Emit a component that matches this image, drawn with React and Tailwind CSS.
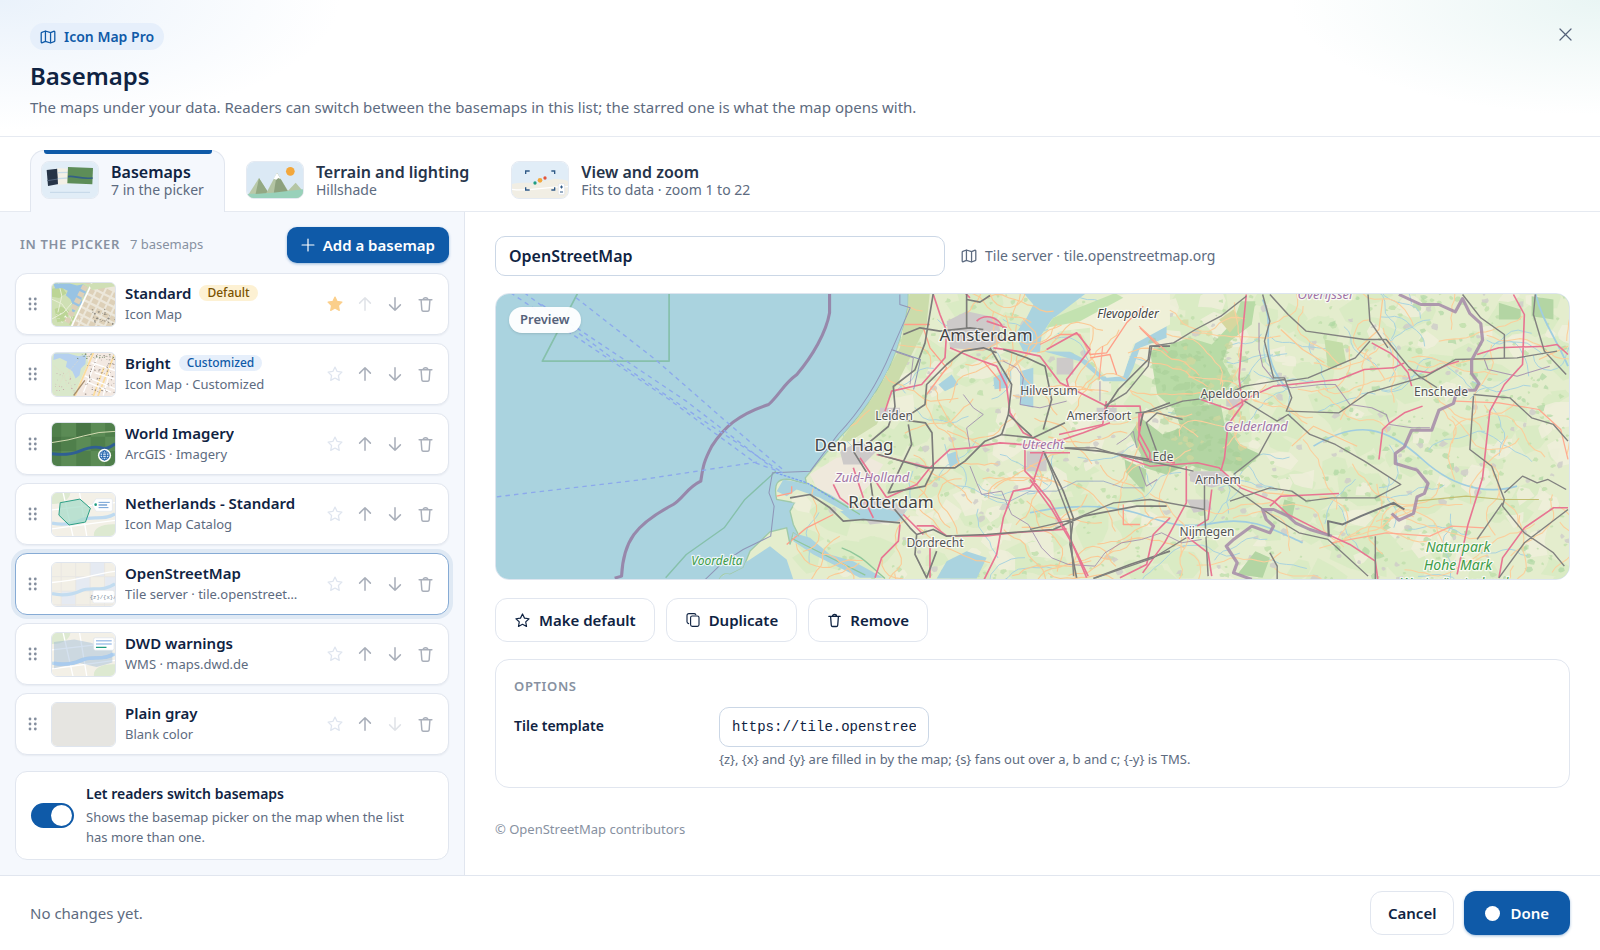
import { useState } from "react";

/* ---------- icons ---------- */

function Icon({ size = 20, children, className = "" }) {
  return (
    <svg
      width={size}
      height={size}
      viewBox="0 0 20 20"
      fill="none"
      stroke="currentColor"
      strokeWidth="1.4"
      strokeLinecap="round"
      strokeLinejoin="round"
      aria-hidden="true"
      className={"shrink-0 " + className}
    >
      {children}
    </svg>
  );
}

const MapIcon = (p) => (
  <Icon {...p}>
    <path
      d="M1.500 5.200c0-.5.300-.9.800-1.100L6.800 2.500 13.200 4.500 17 2.900c.8-.3 1.500.200 1.500.9v11c0 .5-.3.9-.8 1.100L13.200 17.500 6.800 15.500 3 17.100c-.8.300-1.500-.2-1.500-.9zM6.800 2.500v13M13.200 4.500v13"
      strokeWidth="1.600"
    />
  </Icon>
);

const STAR = "M10 2.300l2.350 4.900 5.350.75-3.900 3.750.95 5.350L10 14.500l-4.750 2.550.95-5.350L2.300 7.950l5.350-.75z";
const StarIcon = ({ filled, ...p }) => (
  <Icon {...p}>
    <path d={STAR} fill={filled ? "currentColor" : "none"} />
  </Icon>
);
const ArrowUp = (p) => (
  <Icon {...p}>
    <path d="M10 17V3M4 9l6-6 6 6" strokeWidth="1.700" />
  </Icon>
);
const ArrowDown = (p) => (
  <Icon {...p}>
    <path d="M10 3v14M4 11l6 6 6-6" strokeWidth="1.700" />
  </Icon>
);
const TrashIcon = (p) => (
  <Icon {...p}>
    <path d="M2.500 4.500h15M7.300 4.300C7.300 2.900 8.400 2 10 2s2.700.9 2.700 2.300M4.800 4.700l.9 11.600c.1 1 .8 1.700 1.800 1.700h5c1 0 1.700-.7 1.800-1.700l.9-11.600" strokeWidth="1.700" />
  </Icon>
);
const CopyIcon = (p) => (
  <Icon {...p}>
    <rect x="7" y="5" width="10.500" height="13" rx="2" />
    <path d="M4.600 14.500C3.400 14.300 2.500 13.500 2.500 12.200V4.500c0-1.700 1.200-2.500 2.500-2.500h6.200c1.200 0 2 .5 2.300 1.300" />
  </Icon>
);
const PlusIcon = (p) => (
  <Icon {...p}>
    <path d="M10 1.500v17M1.500 10h17" strokeWidth="1.700" />
  </Icon>
);
const CloseIcon = (p) => (
  <Icon {...p}>
    <path d="M3.500 3.500l13 13M16.500 3.500l-13 13" />
  </Icon>
);
const GripIcon = () => (
  <svg width="10" height="14" viewBox="0 0 10 14" fill="currentColor" aria-hidden="true">
    {[2, 7, 12].map((y) => (
      <g key={y}>
        <circle cx="2" cy={y} r="1.400" />
        <circle cx="7.300" cy={y} r="1.400" />
      </g>
    ))}
  </svg>
);

/* ---------- deterministic scatter for map texture ---------- */

function rng(seed) {
  let s = seed;
  return () => {
    s = (s * 1664525 + 1013904223) % 4294967296;
    return s / 4294967296;
  };
}

function blob(rand, cx, cy, r) {
  const n = 7;
  let d = "";
  for (let i = 0; i < n; i++) {
    const a = (i / n) * Math.PI * 2;
    const q = r * (0.5 + rand() * 0.8);
    d += (i ? "L" : "M") + (cx + Math.cos(a) * q * 1.2).toFixed(1) + " " + (cy + Math.sin(a) * q).toFixed(1);
  }
  return d + "Z";
}

function scatter(seed, count, x0, x1, y0, y1, rMin, rMax) {
  const rand = rng(seed);
  let d = "";
  for (let i = 0; i < count; i++) {
    d += blob(rand, x0 + rand() * (x1 - x0), y0 + rand() * (y1 - y0), rMin + rand() * (rMax - rMin));
  }
  return d;
}

function wander(seed, count, x0, x1, y0, y1, len) {
  const rand = rng(seed);
  let d = "";
  for (let i = 0; i < count; i++) {
    let x = x0 + rand() * (x1 - x0);
    let y = y0 + rand() * (y1 - y0);
    let a = rand() * Math.PI * 2;
    d += "M" + x.toFixed(1) + " " + y.toFixed(1);
    for (let k = 0; k < len; k++) {
      a += (rand() - 0.5) * 1.1;
      x += Math.cos(a) * 7;
      y += Math.sin(a) * 6;
      d += "L" + x.toFixed(1) + " " + y.toFixed(1);
    }
  }
  return d;
}

/* ---------- thumbnails ---------- */

function StandardThumb() {
  const blocks = [];
  for (let i = -1; i < 7; i++) for (let j = 0; j < 7; j++) blocks.push([i, j]);
  return (
    <svg viewBox="0 0 192 132" className="size-full" preserveAspectRatio="xMidYMid slice" aria-hidden="true">
      <rect width="192" height="132" fill="#d3dfba" />
      <path d="M0 0h110L122 20 70 132H0z" fill="#cfe0b4" />
      <path d="M0 18l30-6 14 20-22 14-22-4zM8 80l20-8 24 14-6 28-30 6zM60 100l20 4-6 24H52z" fill="#bcd596" />
      <path d="M0 50l30 14 20 28 18 40M0 110l36-20 24-28M20 0l10 40-12 50" stroke="#e9efd6" strokeWidth="3" fill="none" />
      <path d="M4 2h50l22 6 18-4 14 10-8 24-10 8 2 18-14 10-12 18-6-4 4-20-8-18-14-12 6-14-18-8-20 2z" fill="#98c3e3" />
      <path d="M118 10h74v122H64z" fill="#ece7da" />
      <g transform="translate(116 14) rotate(27)">
        {blocks.map(([i, j]) => (
          <rect key={i + "-" + j} x={i * 24} y={j * 22 - 20} width="18" height="15" fill="#ddd0b8" />
        ))}
      </g>
      <path d="M122 0L60 132" stroke="#fff" strokeWidth="5" />
      <path d="M110 4l20-4h62v10l-70 12z" fill="#cfdfb5" />
      <path d={scatter(3, 26, 120, 190, 80, 130, 1, 3)} fill="#8f8a80" />
      <path d={scatter(5, 18, 10, 90, 90, 130, 1, 2)} fill="#fff" />
    </svg>
  );
}

function BrightThumb() {
  return (
    <svg viewBox="0 0 192 132" className="size-full" preserveAspectRatio="xMidYMid slice" aria-hidden="true">
      <rect width="192" height="132" fill="#f3e9e2" />
      <path d="M0 0h104L110 30 66 132H0z" fill="#d9e8cb" />
      <path d="M6 2h44l30 8 24-4-2 28-14 14-4 20-12 10-10-22-20-14 4-16-22-10-20 6z" fill="#b5d0ef" />
      <path d="M50 50c10 20-6 40 20 80M6 40l30 24 10 40M80 24L30 80 6 128" stroke="#e6dcc4" strokeWidth="2" fill="none" strokeDasharray="4 3" />
      <path d="M126 0L70 132M160 40l-34 92M192 0l-52 132" stroke="#fbdc9c" strokeWidth="5" fill="none" />
      <path d="M140 10l-44 110M176 60l-20 70M110 90l70 30M130 60l60 20M100 70l92 40M120 30l72 24" stroke="#fff" strokeWidth="4" fill="none" />
      <path d={scatter(11, 70, 96, 190, 4, 128, 1, 2.2)} fill="#8d827d" />
      <path d={scatter(13, 30, 70, 190, 2, 20, 1, 2.4)} fill="#7b8f73" />
      <path d={scatter(17, 22, 4, 80, 60, 126, 0.8, 2)} fill="#c59aa6" />
      <path d="M100 84l-34 46" stroke="#a58d6e" strokeWidth="4" />
    </svg>
  );
}

function ImageryThumb() {
  return (
    <svg viewBox="0 0 192 132" className="size-full" preserveAspectRatio="xMidYMid slice" aria-hidden="true">
      <rect width="192" height="132" fill="#4f7f4b" />
      <path d="M28 0h46v42H28zM118 0h44v42h-44zM0 42h28v44H0zM74 42h44v44H74zM162 42h30v44h-30zM28 86h46v46H28zM118 86h44v46h-44z" fill="#5b8b55" />
      <path d="M0 42h28v44H0zM74 0h44v42H74z" fill="#487545" />
      <path d="M0 60Q50 54 96 40T192 26" stroke="#d5dcb4" strokeWidth="3" fill="none" />
      <path d="M0 94c30 4 60 2 84-8s44-16 64-10 32-4 44-12" stroke="#2f5f93" strokeWidth="9" fill="none" />
      <circle cx="160" cy="99" r="20" fill="#fff" />
      <g stroke="#165ba6" strokeWidth="3" fill="none">
        <circle cx="160" cy="99" r="14" fill="#dce9f8" />
        <ellipse cx="160" cy="99" rx="6" ry="14" />
        <path d="M146 99h28M148 92h24M148 106h24" strokeWidth="2.500" />
      </g>
    </svg>
  );
}

function PaleBase() {
  return (
    <>
      <rect width="192" height="132" fill="#f3f0e7" />
      <path d="M0 0h56c-2 22-30 36-56 34zM128 132c-4-22 20-38 64-36v36z" fill="#dde9d1" />
      <path d="M0 52L192 30M34 0l30 132M84 0l22 132M0 110l192-26" stroke="#fff" strokeWidth="4" fill="none" />
      <path d="M0 92c34 8 60 4 90-10s70 4 102-18" stroke="#bedaf0" strokeWidth="10" fill="none" />
    </>
  );
}

function CatalogThumb() {
  return (
    <svg viewBox="0 0 192 132" className="size-full" preserveAspectRatio="xMidYMid slice" aria-hidden="true">
      <PaleBase />
      <path d="M25 30l60-11 32 28-15 42-50 9-31-30z" fill="#a8dcc9" fillOpacity=".75" stroke="#2a9d84" strokeWidth="3" strokeLinejoin="round" />
      <path d="M122 36l12-18h46q4 0 4 4v30q0 4-4 4h-46z" fill="#fff" stroke="#e1e6ee" strokeWidth="2" />
      <circle cx="133" cy="36" r="4" fill="#1f9c81" />
      <path d="M142 29h34M142 45h30" stroke="#6f9fd4" strokeWidth="3" />
      <path d="M142 37h26" stroke="#3273bd" strokeWidth="3" />
    </svg>
  );
}

function TileThumb() {
  return (
    <svg viewBox="0 0 192 132" className="size-full" preserveAspectRatio="xMidYMid slice" aria-hidden="true">
      <rect width="192" height="132" fill="#f2efe6" />
      <path d="M116 0h46v40h-46zM72 42h44v42H72zM28 86h44v46H28zM162 42h30v42h-30z" fill="#e5eaf2" />
      <path d="M28 0v132M72 0v132M116 0v132M160 0v132M0 42h192M0 86h192M0 128h192" stroke="#e9e7e3" strokeWidth="3" />
      <path d="M0 60Q60 54 110 42T192 26" stroke="#fff" strokeWidth="4" fill="none" />
      <path d="M0 94c34 8 64 2 90-10s66 6 102-20" stroke="#c2dcf0" strokeWidth="10" fill="none" />
      <rect x="124" y="84" width="66" height="38" rx="6" fill="#fff" stroke="#e3e7ee" strokeWidth="2" />
      <text x="115" y="110" className="font-mono" fontSize="17" fill="#6e7f93">
        {"{z}/{x}/{y}"}
      </text>
    </svg>
  );
}

function WmsThumb() {
  return (
    <svg viewBox="0 0 192 132" className="size-full" preserveAspectRatio="xMidYMid slice" aria-hidden="true">
      <PaleBase />
      <path d="M6 28l62-8 50 10 66 22v38l-48 14-52-12L6 108z" fill="#8fb0d6" fillOpacity=".38" />
      <path d="M6 92c34 8 60 4 90-10s60 4 90-18" stroke="#a9cbee" strokeWidth="10" fill="none" />
      <rect x="127" y="15" width="62" height="38" rx="5" fill="#fff" stroke="#dbe2ea" strokeWidth="2" />
      <path d="M134 24h48M134 34h48" stroke="#a7c5ea" strokeWidth="5" />
      <path d="M134 44h32" stroke="#1f9c81" strokeWidth="4" />
    </svg>
  );
}

function BlankThumb() {
  return <div className="size-full bg-[#e6e5e1]" />;
}

function BasemapsTabArt() {
  return (
    <svg viewBox="0 0 168 108" className="size-full" aria-hidden="true">
      <rect width="168" height="108" fill="#e1edf7" />
      <path d="M14 24l32-4 4 46-32 6z" fill="#263447" />
      <path d="M16 56l32-5" stroke="#51627a" strokeWidth="3" />
      <path d="M46 18l34 2v46l-32 2z" fill="#f3f0e6" />
      <path d="M48 32l32-1M48 50l32-2" stroke="#c7dbe9" strokeWidth="4" />
      <path d="M78 15l75 3-2 49-75-3z" fill="#5d8d58" />
      <path d="M78 44c20-4 34 8 74 4" stroke="#335f86" strokeWidth="5" fill="none" />
      <path d="M24 91h120" stroke="#c3d6e7" strokeWidth="3" />
    </svg>
  );
}

function TerrainTabArt() {
  return (
    <svg viewBox="0 0 168 108" className="size-full" aria-hidden="true">
      <rect width="168" height="108" fill="#dbe9f5" />
      <circle cx="130" cy="28" r="13" fill="#f3a73b" />
      <path d="M110 100l36-38 22 26v20h-58z" fill="#b5c6a5" />
      <path d="M0 104l36-56 38 60H0z" fill="#b9c9a8" />
      <path d="M36 48l36 56H24z" fill="#93a883" />
      <path d="M50 108l40-76 46 76z" fill="#b3c4a3" />
      <path d="M90 32l44 76H78z" fill="#8da17e" />
      <path d="M90 32l12 20-8-4-6 5-8-3z" fill="#fff" />
      <path d="M0 96c50 0 90-4 168-14v26H0z" fill="#98d1ba" />
    </svg>
  );
}

function ViewTabArt() {
  return (
    <svg viewBox="0 0 168 108" className="size-full" aria-hidden="true">
      <rect width="168" height="108" fill="#e1edf7" />
      <path d="M0 66c40-8 60 2 100-10 30-8 50-6 68 2v50H0z" fill="#f1eee4" />
      <path d="M0 82c50 8 90-8 168-8" stroke="#fff" strokeWidth="4" fill="none" />
      <path d="M41 36v-9h12M118 27h10v9M41 76v8h12M118 84h10v-8" stroke="#2f5986" strokeWidth="4" fill="none" />
      <circle cx="69" cy="63" r="5" fill="#1f9c81" />
      <circle cx="84" cy="55" r="7" fill="#f3a73b" />
      <circle cx="99" cy="48" r="5" fill="#e2553d" />
      <rect x="139" y="65" width="19" height="33" rx="4" fill="#fff" stroke="#dde3ec" strokeWidth="2" />
      <path d="M144 75h9M148.500 70.500v9M144 90h9" stroke="#2f5986" strokeWidth="3" />
    </svg>
  );
}

/* ---------- large preview map ---------- */

const LAND =
  "M415 0L4000 0L4000 1000L-170 1000C-160 880 -150 860 -120 870L-80 850L-60 800L0 742L50 730L60 780L70 745L90 760L70 720L60 680L75 655L20 645C10 600 20 580 60 585L110 600L106 580L200 470C250 420 290 370 325 310C370 240 400 150 415 60Z";

const LABELS = [
  ["Amsterdam", 490, 47, 17, "#444444", false],
  ["Den Haag", 358, 157, 17, "#444444", false],
  ["Rotterdam", 395, 214, 17, "#444444", false],
  ["Leiden", 398, 126, 12, "#555555", false],
  ["Hilversum", 553, 101, 12, "#555555", false],
  ["Amersfoort", 603, 126, 12, "#555555", false],
  ["Apeldoorn", 734, 104, 12, "#555555", false],
  ["Enschede", 945, 102, 12, "#555555", false],
  ["Ede", 667, 167, 12, "#555555", false],
  ["Arnhem", 722, 190, 12, "#555555", false],
  ["Nijmegen", 711, 242, 12, "#555555", false],
  ["Dordrecht", 439, 253, 12, "#555555", false],
  ["Flevopolder", 632, 24, 12, "#444444", true],
  ["Utrecht", 547, 155, 13, "#a074a6", true],
  ["Zuid-Holland", 376, 188, 13, "#a074a6", true],
  ["Gelderland", 760, 137, 13, "#a074a6", true],
  ["Overijssel", 829, 5, 13, "#a074a6", true],
  ["Voordelta", 221, 271, 12, "#3d9c48", true],
  ["Naturpark", 962, 258, 14, "#3d9c48", true],
  ["Hohe Mark", 962, 276, 14, "#3d9c48", true],
  ["Westmünsterland", 958, 294, 14, "#3d9c48", true],
];

function PreviewMap() {
  return (
    <svg
      viewBox="0 0 1073 286"
      preserveAspectRatio="xMidYMid slice"
      role="img"
      aria-label="OpenStreetMap preview"
      className="absolute inset-0 size-full"
    >
      <defs>
        <clipPath id="land">
          <path d={LAND} transform="matrix(.3333 0 0 .3333 274 -9)" />
        </clipPath>
      </defs>
      <rect width="1073" height="286" fill="#aad3df" />

      <g transform="matrix(.3333 0 0 .3333 274 -9)">
        <path d={LAND} fill="#e4edcd" stroke="#9fc9a8" strokeWidth="4" />
      </g>

      <g clipPath="url(#land)">
        <path d={scatter(21, 260, 300, 1073, 0, 286, 6, 20)} fill="#d5eac0" fillOpacity=".7" />
        <path d={scatter(22, 120, 300, 1073, 0, 286, 5, 14)} fill="#f0efdc" fillOpacity=".8" />
        <path d={scatter(24, 520, 320, 1073, 0, 286, 1, 3)} fill="#bfdfab" fillOpacity=".8" />
        <path d={scatter(28, 80, 830, 1073, 0, 286, 1.5, 4)} fill="#abd59f" fillOpacity=".65" />
        <path d={scatter(25, 190, 300, 1073, 0, 286, 1.5, 4)} fill="#cfcdc9" fillOpacity=".85" />
        <path d={wander(31, 80, 320, 1073, 0, 286, 9)} fill="none" stroke="#a9d3df" strokeWidth="1" />

        <g transform="matrix(.3333 0 0 .3333 274 -9)">
          <path d="M420 20h60L470 120 400 260 320 420 240 470 210 470 320 320 390 190z" fill="#cbdcab" />
          <path d="M120 570l80-50 80-10 60 30-40 60-60 60-90-30z" fill="#efe9dc" />
          <path d="M530 110l60-30 90 20 20 70-60 30-100-10zM210 500l60-30 50 30-40 40-60 0zM250 660l90-20 70 30-20 40-90 10zM770 500h60v60h-60zM330 370h60v30h-60zM860 220h50v50h-50zM980 370h60v40h-60z" fill="#cdcac9" />
          <path d="M760 25h190L845 105 815 150 810 205 760 200 735 150 770 100 790 60z" fill="#aad3df" />
          <path d="M820 200l80 2 50 25 50 50 60-10 40-100 90-70V160L1110 190 1090 250 1070 290 1000 290 930 230z" fill="#aad3df" />
          <path d="M1060 30L850 100 815 180 870 140 960 130 960 220 1010 280 1060 275 1090 180 1200 120V20z" fill="#eff0d8" />
          <path d="M1035 26L850 100 830 130 930 110 1060 40z" fill="#c3e2b0" />
          <path d="M505 300l40-30 20 30-40 20zM670 280l40-20 4 50-40 4zM750 260l40-10v120l-40-10zM530 510l30-10 10 30-30 20z" fill="#aad3df" />
          <path d="M210 680l130-10 60 20-20 20-140-5zM70 745l50 15 60 50 70 20 90 50h-70l-80-40-60-30-60-40zM-160 885l100-60 60-40 50 40 20 60zM530 830l60-30 60 20-30 62H500z" fill="#aad3df" />
          <path d="M20 620l20-35 80 15 60 30 80 50-20 10-90-50-70-25-30 20z" fill="#aad3df" />
          <path d="M66 762l120 60 100 50M120 600l150 90M215 790c60 20 90 60 130 92" stroke="#8fc79a" strokeWidth="4" fill="none" />
        </g>

        <g transform="matrix(.3635 0 0 .3333 534 -14)">
          <path d="M330 215l110-40 60 20 60-70 20-60 40 0-10 70-60 50-20 60 30 60-40 40-60 40-70 0-40-40z" fill="#b8dba6" />
          <path d="M395 385l130-10 10 60 40 60 60 30-50 50-90 0-60-20-60 30-60-20-10-40-30-60 30-50 60 50 50-20z" fill="#b3d5a3" />
          <path d="M520 120l40-30 20 30-30 40z" fill="#d6d79f" />
          <path d="M810 180l50 10 10 60-50 20z" fill="#c3dda8" />
          <path d="M260 540l60 30-5 70-50-60zM620 815l40 20-20 60-70-10zM700 660l30 10-10 50-30-20zM1380 50l60 10v60l-60-10zM1290 70l60 20 0 30-60 0z" fill="#b3d5a3" />
          <path d={scatter(33, 130, 335, 600, 180, 600, 4, 12)} fill="#a6cd96" fillOpacity=".5" />
          <path d={scatter(34, 40, 380, 590, 120, 560, 4, 12)} fill="#d3d79e" fillOpacity=".7" />
          <path d="M540 355l40-10 20 20-20 20-40-5zM440 575l90 0 30 30-60 20-60-20zM430 660l60 0 10 30-50 10z" fill="#cdcac9" />
          <path d="M0 700c80-20 200-30 290 0s120 50 220 30 160 20 240 60M640 60c40 80-20 150 60 260M780 500c120-80 200-60 300 40s200 100 260 80M1390 40c20 90 60 140 90 220" stroke="#a0cde0" strokeWidth="5" fill="none" />
        </g>

        <path d={wander(41, 70, 310, 640, 0, 286, 12)} fill="none" stroke="#fbc994" strokeWidth="1.100" />
        <path d={wander(42, 65, 640, 1073, 0, 286, 13)} fill="none" stroke="#fbcf9c" strokeWidth="1.100" />

        {/* western road and rail network */}
        <g transform="matrix(.3333 0 0 .3333 274 -9)" fill="none" strokeLinejoin="round">
          <g stroke="#9a86ac" strokeWidth="3" strokeOpacity=".8">
            <path d="M600 545l20 50 15 35 60-10 30 70 50 30 40 70 30 30 50 20 80 5 30-40 50-30 60-10 60-20 60 30 60-10" />
            <path d="M580 330l30 40 30 20-50 40 10 60M420 300l10-80-60-20M1040 480l30-20 20-20 10 50M990 290v60M700 230l40 20 20 30-10 80 60 10 80-20" />
            <path d="M640 630l80 20 60-30 80 0 60-30 80 0 60 20 60 0" stroke="#93a5c7" />
          </g>
          <g stroke="#ff9f88" strokeWidth="4">
            <path d="M400 120h80M460 130l20 60 50 60-60 80M640 230l50 60 0 30M50 780l60-50 80-40M20 635l45-10 0-20M810 180l60-30 60 0 30 60 50-5 60-90 50-50M960 220l60-10 20 60M1110 130l60 60M1060 660v60h50" />
          </g>
          <g stroke="#e87592" strokeWidth="5">
            <path d="M490 30l20 60 20 50-5 80-70 80-90 20-20 60M540 190l70 30 70 25 30 60 10 80 40 60 60 30M650 110l60 20M600 40l-20-20M620 110c20-20 60-20 80 20" />
            <path d="M320 510l160 40 60-55 60-5 90-15 130 10 120-40 80-30M670 190l70 10 70 15 60 80 60 30 80 40 100 0 5 40-10 60 30 60 80 10M830 195l90-50 40 50-70 90 10 40" />
            <path d="M765 480l0 80 30 30-15 20-50 10-30 80-20 110-40 80M820 500l-30 90 50 60 60 110 50 120M270 520l60 90 20 30 90-40 40-50M250 550l30 90 30 60M190 600l20 40 40 30M400 690l60 60M390 720l-5 50-50 50-20 60M480 790v90M1200 700l-50 50-20 90-80 40M440 724h50l40 30 120 0 90-10 150-10" />
          </g>
          <g stroke="#7c7c7a" strokeWidth="5">
            <path d="M490 26l-25 150-30 80-65 50 5 60-20 60-60 50M250 500l50 80 10 70M400 150l50-20 60 10 90-10 40 5M590 26v105M590 45l40 8 30-20" />
            <path d="M660 190l65 110-10 90-20 60-50 20-60 60-30 20-90 0-140-40M690 450l100 10 95-45M715 390l70 65M580 200l60-10 40 15M580 200l-50 40-60 60-5 60-60 40M415 420l10 60-70 145 110-20 25-50-4-110-20-30-60-8" />
            <path d="M60 640l60-10 60 40 40 40 60-5 110 10M370 670l50 60 20 20 50-15 40 20 120-5 200-15 90-40 160-30h90M820 500l60 120 30 80-10 80 20 100M440 750l-5 60 35 70 30-80M700 195l70 25 55 25 20 100-25 90M880 490l110 10 150 25M1200 800l-120 40-110 42M1200 185h-60l-5 40-90 90-40 60M1200 355l-80 30-10 40" />
          </g>
        </g>

        {/* eastern road and rail network */}
        <g transform="matrix(.3635 0 0 .3333 534 -14)" fill="none" strokeLinejoin="round">
          <g stroke="#9b83aa" strokeWidth="3" strokeOpacity=".8">
            <path d="M630 130v80l10 50 30 40M680 315l40 10 80-10 40 0 40 60 60 10 40 20 10 30 60 10h50M1250 240l10 30 80 20 90-30M300 560l20 60 30-20" />
          </g>
          <g stroke="#ffaa90" strokeWidth="3.500">
            <path d="M200 200l-10 100M300 140l80 80M830 790l150-30 120 10 60-30 90 5M1170 365l120 5 110 20 60 60 20 90" />
            <path d="M690 150l60 60 60 40M970 60l-10 90-60 60M1400 240l80-40M720 500l60-60 120 60M560 610l90 30 100 10" stroke="#fbc994" />
            <path d="M1060 665l140-15 100 10 100 0" stroke="#c3bf72" />
          </g>
          <g stroke="#e87592" strokeWidth="4.500">
            <path d="M595 45l-10 110-10 140 10 80-40 60-10 100-10 40M0 520h110M80 465l120-30 10-70M470 360l80 30 60-40 60-30 180-20 70-30 80-5 30-15M1330 45l30 60-5 150-50 60-40 80-20 200-40 140-30 150M1230 225l60-20 130-5 30-5 30 30M1040 270l60 10 50-25 30-10M940 190l50 30 20 20 30 40 10 40" />
            <path d="M0 600l60 90 60 110 40 90M250 530l80 30 70-5 60-5 60 15 60 60 90 40 40 40 90 50 80 40 70 50 10 80M430 560l0 110-60 120-60 90M500 630l-10 90-30 20M660 680l30-30 160-8M430 770l60 50 10 70M1480 685h-40l-80 60-60 90-10 60M300 400l0 60 30 60 0 30M960 540l10-90 20-20 40-30 50-20" />
          </g>
          <g stroke="#828280" strokeWidth="4">
            <path d="M595 50l-70 60-70 40-60 40-60 10-10 60-60 80-60 40M640 45l20 80-15 60 25 110h30l20 60-15 40 145 5 80-60 160-50 80-50 170-5 110-20M660 45l50 60 50 50 160 25 60 0 60 80 30 30 50 35M930 45l5 80 50 80M935 185l-40 50-130 60-60 10M700 300l-110 20-60 30-110 15-80 30-50 5M1190 45l50 70 65 50v70M1390 45l-5 60 30 110 60 70" />
            <path d="M100 505h80l60 20 130 30 80 20M590 365l90 60 30-20 60 60 70 30 80 50 100 70-70 40-60 0-60 0-70 10-40-30-60-10-110 40M560 585l70-60 40-80M480 610v80M480 690l-150-30-100 10-110 50-120 30M40 520l70 200 10 170M540 610l140 110 60 40 80 20 110 110M1220 345l100 10 60 60 60 20 40 50M1220 350l-10 160 60 50 35 100-5 20 60 80 80 60 30 40M1305 640l50-50 40 20 30-10 50 30M1480 690l-120 100-70 105M1300 670l-70 110M950 770v130M180 895l160-60 90-60M420 420l-70-20-30 30 30 90M660 820l20 40v40M480 690l10 200" />
          </g>
          <g stroke="#a48aa8" strokeWidth="9">
            <path d="M1015 45l60 30 50 0 45 22 20-40 20 45 30 30 5 50-30 60 0 40 20 30-10 20-50 0-10 40-40 20-20 60h-55l-20 50-25 20v30l60 20 30 40-10 30-20 10-10 50-40 20-20-20" strokeOpacity=".85" />
            <path d="M830 770l-60-20-40-20-20-20-40-20h-30l10 30 20 20-10 20-50-20-50 40-20 20 30 50-10 30 50 20" strokeOpacity=".85" />
          </g>
          <path d="M1030 690l-30-20-90 40-50 25-40-10 2 45" stroke="#77797b" strokeWidth="6" />
        </g>
      </g>

      {/* offshore boundaries, ferry lines and the marine reserve */}
      <g transform="matrix(.3444 0 0 .3333 -6 -14)" fill="none" strokeLinejoin="round">
        <path d="M255 40L152 245H520V40" stroke="#86c0ab" strokeWidth="5" />
        <path d="M830 575l-90 85-60 85-110 80-60 70" stroke="#86c0ab" strokeWidth="4" />
        <path d="M986 40v60c-10 60-50 130-95 185-40 30-50 60-82 90-90 30-130 70-165 125-25 50-25 60-32 105-40 20-50 50-80 70-110 60-145 110-150 215l-20 6" stroke="#9788ab" strokeWidth="9" />
        <path d="M1190 45l0 30 30 10-55 130c-40 100-90 180-155 250l-80 110-110 5-10 60 15 40-10 90-80 40-60 40-50 50M1165 210l85 30-20 90" stroke="#8f96b8" strokeWidth="3" />
        <path d="M60 40l230 160 230 160 250 190 80 30M100 40l260 200 240 170 250 170M150 75l420 290 250 200M250 55l230 185 210 190 160 140M20 652l80-10 330-40 350-55" stroke="#8ca9ec" strokeWidth="4" strokeDasharray="13 12" />
        <path d="M830 580l90 30 80 50" stroke="#7ba0ee" strokeWidth="4" strokeDasharray="8 4" />
      </g>

      {LABELS.map(([t, x, y, s, c, italic]) => (
        <text
          key={t}
          x={x}
          y={y}
          fontSize={s}
          fill={c}
          stroke="#ffffff"
          strokeOpacity=".75"
          strokeWidth="2.500"
          paintOrder="stroke"
          strokeLinejoin="round"
          textAnchor="middle"
          fontStyle={italic ? "italic" : "normal"}
          className="font-['Noto_Sans',sans-serif]"
        >
          {t}
        </text>
      ))}
    </svg>
  );
}

/* ---------- data ---------- */

const TABS = [
  { id: "basemaps", title: "Basemaps", note: "7 in the picker", Art: BasemapsTabArt },
  { id: "terrain", title: "Terrain and lighting", note: "Hillshade", Art: TerrainTabArt },
  { id: "view", title: "View and zoom", note: "Fits to data · zoom 1 to 22", Art: ViewTabArt },
];

const BASEMAPS = [
  { name: "Standard", source: "Icon Map", Thumb: StandardThumb, badge: "Default" },
  { name: "Bright", source: "Icon Map · Customized", Thumb: BrightThumb, badge: "Customized" },
  { name: "World Imagery", source: "ArcGIS · Imagery", Thumb: ImageryThumb },
  { name: "Netherlands - Standard", source: "Icon Map Catalog", Thumb: CatalogThumb },
  { name: "OpenStreetMap", source: "Tile server · tile.openstreetmap.org", Thumb: TileThumb },
  { name: "DWD warnings", source: "WMS · maps.dwd.de", Thumb: WmsThumb },
  { name: "Plain gray", source: "Blank color", Thumb: BlankThumb },
];

/* ---------- pieces ---------- */

function Tab({ tab, active, onSelect }) {
  const { Art } = tab;
  return (
    <button
      type="button"
      role="tab"
      aria-selected={active}
      onClick={onSelect}
      className={
        "relative -mb-px flex h-[62px] items-center gap-3 rounded-t-[14px] border border-b-0 pr-5 pl-[10px] pb-[3px] text-left " +
        (active ? "border-[#e1e6ef] bg-[#f5f8fd]" : "border-transparent")
      }
    >
      {active && <span className="absolute -top-px right-3 left-[13px] h-1 rounded-b-[3px] bg-[#0f5aa8]" />}
      <span className="h-[38px] w-[58px] shrink-0 overflow-hidden rounded-lg border border-[#e4eaf2]">
        <Art />
      </span>
      <span className="flex flex-col">
        <span className={"text-base leading-5 font-semibold " + (active ? "text-[#0f2342]" : "text-[#26344a]")}>
          {tab.title}
        </span>
        <span className="text-sm leading-4 text-[#5d6b80]">{tab.note}</span>
      </span>
    </button>
  );
}

function RowButton({ label, disabled, className = "", children }) {
  return (
    <button
      type="button"
      aria-label={label}
      disabled={disabled}
      className={"flex size-[30px] items-center justify-center text-[#a9afba] disabled:text-[#e0e3e8] " + className}
    >
      {children}
    </button>
  );
}

function BasemapRow({ item, index, selected, onSelect }) {
  const { Thumb } = item;
  const isDefault = item.badge === "Default";
  return (
    <li
      className={
        "flex h-[62px] items-center rounded-xl border bg-white pr-2 pl-3 " +
        (selected
          ? "border-[#86abd5] shadow-[0_0_0_4px_#dfe9f4]"
          : "border-[#e1e6ef] shadow-[0_1px_2px_rgba(15,35,66,0.06)]")
      }
    >
      <button type="button" aria-label={"Reorder " + item.name} className="cursor-grab text-[#848e9e]">
        <GripIcon />
      </button>
      <button type="button" onClick={onSelect} className="ml-[13px] flex min-w-0 flex-1 items-center gap-[9px] text-left">
        <span className="h-[45px] w-[65px] shrink-0 overflow-hidden rounded-md border border-[#dfe5ee]">
          <Thumb />
        </span>
        <span className="min-w-0 flex-1 pr-4 pb-0.5">
          <span className="flex items-center gap-2">
            <span className="truncate text-[15px] leading-5 font-semibold text-[#0f2342]">{item.name}</span>
            {item.badge && (
              <span
                className={
                  "rounded-full px-2 text-xs leading-4 font-medium " +
                  (isDefault ? "bg-[#fdf1d3] text-[#7a5200]" : "bg-[#e6effb] text-[#0f5aa8]")
                }
              >
                {item.badge}
              </span>
            )}
          </span>
          <span className="mt-px block truncate text-[13px] leading-5 text-[#5d6b80]">{item.source}</span>
        </span>
      </button>
      <RowButton label={"Make " + item.name + " the default"} className={isDefault ? "text-[#fbcf8b]" : "text-[#dfe5ef]"}>
        <StarIcon size={18} filled={isDefault} />
      </RowButton>
      <RowButton label={"Move " + item.name + " up"} disabled={index === 0}>
        <ArrowUp size={18} />
      </RowButton>
      <RowButton label={"Move " + item.name + " down"} disabled={index === BASEMAPS.length - 1}>
        <ArrowDown size={18} />
      </RowButton>
      <RowButton label={"Remove " + item.name}>
        <TrashIcon size={17} />
      </RowButton>
    </li>
  );
}

function ActionButton({ icon, children }) {
  return (
    <button
      type="button"
      className="flex h-11 items-center gap-2 rounded-xl border border-[#e1e6ef] bg-white px-[18px] text-[15px] font-semibold text-[#0f2342]"
    >
      {icon}
      {children}
    </button>
  );
}

export default function App() {
  const [tab, setTab] = useState("basemaps");
  const [selected, setSelected] = useState(4);
  const [name, setName] = useState("OpenStreetMap");
  const [template, setTemplate] = useState("https://tile.openstreetmap.org/{z}/{x}/{y}.png");
  const [canSwitch, setCanSwitch] = useState(true);

  return (
    <div className="flex min-h-screen flex-col bg-white font-['Noto_Sans',sans-serif] text-[15px] text-[#0f2342]">
      <header className="flex items-start justify-between border-b border-[#e6eaf1] bg-[radial-gradient(ellipse_340px_130px_at_0%_0%,#eaf2fb,transparent),radial-gradient(ellipse_310px_115px_at_100%_0%,#e9f5f4,transparent)] px-[30px] pt-[23px] pb-[17px]">
        <div>
          <div className="flex h-[27px] w-fit items-center gap-2 rounded-full bg-[#e6effb] px-[10px] text-sm font-semibold text-[#0f5aa8]">
            <MapIcon size={16} />
            Icon Map Pro
          </div>
          <h1 className="mt-[10px] text-2xl leading-8 font-semibold">Basemaps</h1>
          <p className="mt-[3px] leading-6 text-[#5d6b80]">
            The maps under your data. Readers can switch between the basemaps in this list; the starred one is what the map opens with.
          </p>
        </div>
        <button type="button" aria-label="Close" className="-mt-px -mr-2 p-1 text-[#55627a]">
          <CloseIcon size={17} />
        </button>
      </header>

      <nav role="tablist" aria-label="Map settings" className="flex gap-[10px] border-b border-[#e6eaf1] px-[30px] pt-[13px]">
        {TABS.map((t) => (
          <Tab key={t.id} tab={t} active={t.id === tab} onSelect={() => setTab(t.id)} />
        ))}
      </nav>

      <div className="flex flex-1">
        <aside className="w-[465px] shrink-0 border-r border-[#e1e6ef] bg-[#f5f8fd] p-[15px]">
          <div className="flex items-center pl-[5px]">
            <h2 className="text-[13px] font-semibold tracking-wider text-[#8791a1]">IN THE PICKER</h2>
            <span className="ml-[10px] text-[13px] text-[#8791a1]">7 basemaps</span>
            <button
              type="button"
              className="ml-auto flex h-9 items-center gap-2 rounded-[10px] bg-[#0f5aa8] px-[14px] text-[15px] font-semibold text-white shadow-[0_1px_3px_rgba(15,90,168,0.4)]"
            >
              <PlusIcon size={14} />
              Add a basemap
            </button>
          </div>

          <ul className="mt-[10px] flex flex-col gap-2">
            {BASEMAPS.map((item, i) => (
              <BasemapRow key={item.name} item={item} index={i} selected={i === selected} onSelect={() => setSelected(i)} />
            ))}
          </ul>

          <label className="mt-4 flex items-center gap-3 rounded-xl border border-[#e1e6ef] bg-white py-3 pr-5 pl-[15px]">
            <input
              type="checkbox"
              role="switch"
              checked={canSwitch}
              onChange={(e) => setCanSwitch(e.target.checked)}
              className="peer sr-only"
            />
            <span className="flex h-[25px] w-[43px] shrink-0 items-center rounded-full bg-[#b6c0ce] px-[2px] peer-checked:justify-end peer-checked:bg-[#0f5aa8]">
              <span className="size-[21px] rounded-full bg-white" />
            </span>
            <span>
              <span className="block text-sm leading-5 font-semibold">Let readers switch basemaps</span>
              <span className="mt-[3px] block text-[13px] leading-5 text-[#5d6b80]">
                Shows the basemap picker on the map when the list has more than one.
              </span>
            </span>
          </label>
        </aside>

        <main className="min-w-0 flex-1 px-[30px] pt-6">
          <div className="flex items-center gap-4">
            <input
              aria-label="Basemap name"
              value={name}
              onChange={(e) => setName(e.target.value)}
              className="h-10 w-[450px] rounded-[10px] border border-[#cbd7e6] px-[13px] text-base font-semibold"
            />
            <span className="flex items-center gap-2 text-sm text-[#5d6b80]">
              <MapIcon size={16} />
              Tile server · tile.openstreetmap.org
            </span>
          </div>

          <div className="relative mt-[17px] h-[287px] overflow-hidden rounded-[14px] border border-[#dde5ef]">
            <PreviewMap />
            <span className="absolute top-[13px] left-[13px] flex h-[26px] items-center rounded-full bg-white/95 px-[11px] text-[13px] font-semibold text-[#55627a] shadow-sm">
              Preview
            </span>
          </div>

          <div className="mt-[18px] flex gap-[11px]">
            <ActionButton icon={<StarIcon size={17} />}>Make default</ActionButton>
            <ActionButton icon={<CopyIcon size={16} />}>Duplicate</ActionButton>
            <ActionButton icon={<TrashIcon size={15} />}>Remove</ActionButton>
          </div>

          <section className="mt-[17px] rounded-[14px] border border-[#e1e6ef] px-[18px] pt-4 pb-[18px]">
            <h2 className="text-[13px] leading-5 font-semibold tracking-wider text-[#8791a1]">OPTIONS</h2>
            <div className="mt-[11px] grid grid-cols-[185px_1fr] gap-x-5">
              <label htmlFor="tile-template" className="pt-[9px] text-sm leading-5 font-semibold">
                Tile template
              </label>
              <div>
                <input
                  id="tile-template"
                  value={template}
                  onChange={(e) => setTemplate(e.target.value)}
                  className="block h-10 w-[210px] rounded-[10px] border border-[#cbd7e6] px-3 font-['Liberation_Mono',monospace] text-sm"
                />
                <p className="mt-0.5 text-[13px] leading-5 text-[#5d6b80]">
                  {"{z}, {x} and {y} are filled in by the map; {s} fans out over a, b and c; {-y} is TMS."}
                </p>
              </div>
            </div>
          </section>

          <p className="mt-[31px] text-[13px] leading-5 text-[#8791a1]">© OpenStreetMap contributors</p>
        </main>
      </div>

      <footer className="flex items-center justify-between border-t border-[#e1e6ef] px-[30px] py-[15px]">
        <p className="text-[#5d6b80]">No changes yet.</p>
        <div className="flex gap-[10px]">
          <button type="button" className="h-11 rounded-xl border border-[#e1e6ef] bg-white px-[17px] text-[15px] font-semibold">
            Cancel
          </button>
          <button
            type="button"
            className="flex h-11 items-center gap-[10px] rounded-xl bg-[#0f5aa8] px-[21px] text-[15px] font-semibold text-white shadow-[0_1px_3px_rgba(15,90,168,0.4)]"
          >
            <span className="size-[15px] rounded-full bg-white" />
            Done
          </button>
        </div>
      </footer>
    </div>
  );
}
